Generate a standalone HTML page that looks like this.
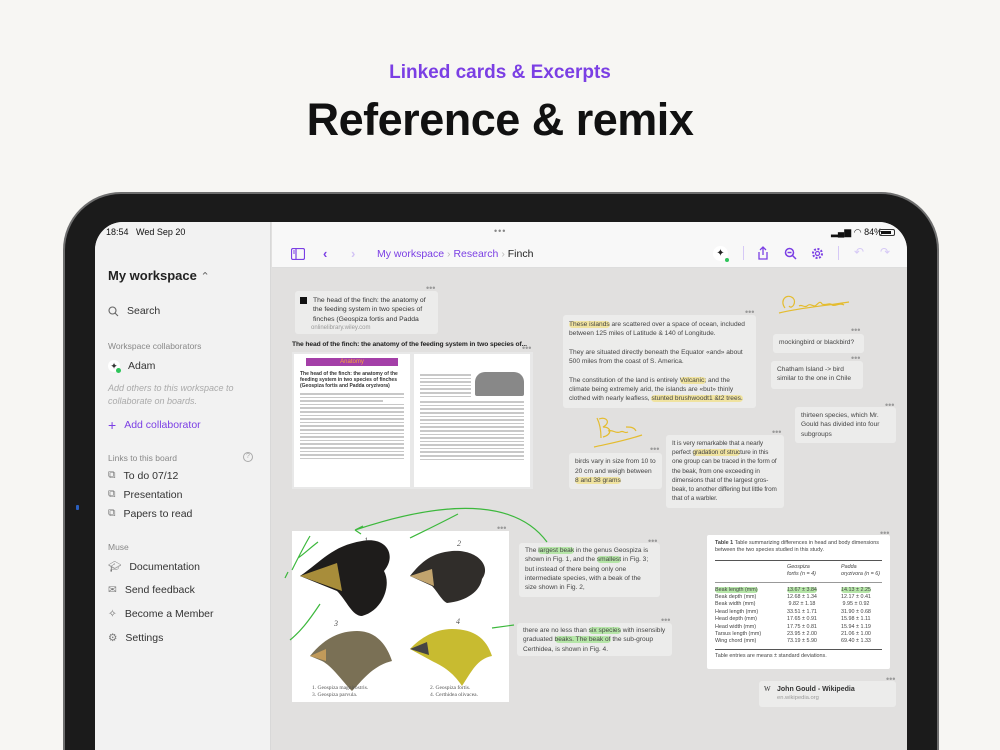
<!DOCTYPE html>
<html><head><meta charset="utf-8">
<style>
*{margin:0;padding:0;box-sizing:border-box}
html,body{width:1000px;height:750px;overflow:hidden}
body{background:#f7f6f3;font-family:"Liberation Sans",sans-serif;position:relative;color:#222}
.a{position:absolute}
.card{position:absolute;background:#ececeb;border-radius:3px;font-size:7.4px;line-height:11.2px;color:#444;padding:6px 7px;overflow:hidden}
.dots{position:absolute;font-size:9px;color:#999;line-height:6px}
.hy{background:#f0e3a0;border-radius:4px}
.hg{background:#b6e6a8;border-radius:4px}
.sbi{position:absolute;left:108px;font-size:10.5px;color:#333;display:flex;align-items:center;gap:8px}
.sec{position:absolute;left:108px;font-size:8.5px;color:#888}
.doc{position:absolute;background:#fff}
.ln{height:1.6px;background:#c8c8c8;margin:2px 0}
</style></head><body>
<div class="a" style="top:62px;width:1000px;text-align:center;color:#7b3fe4;font-size:19px;font-weight:bold">Linked cards &amp; Excerpts</div>
<div class="a" style="top:94px;width:1000px;text-align:center;color:#111;font-size:45px;font-weight:bold;letter-spacing:-0.5px">Reference &amp; remix</div>

<!-- iPad frame -->
<div class="a" style="left:63px;top:192px;width:876px;height:558px;background:#1b1b1b;border-radius:58px 58px 0 0;border:2px solid #6e6e6e;border-bottom:none"></div>
<div class="a" style="left:95px;top:222px;width:812px;height:528px;background:#e1e0df;border-radius:28px 28px 0 0;overflow:hidden">
  <div class="a" style="left:0;top:0;width:176px;height:528px;background:#f2f2f2;border-right:1px solid #d8d8d8"></div>
  <div class="a" style="left:177px;top:0;width:635px;height:46px;background:#f8f8f8;border-bottom:1px solid #ddd"></div>
</div>
<div class="a" style="left:76px;top:505px;width:3px;height:5px;background:#2a5fbf;border-radius:1px"></div>

<!-- status bar -->
<div class="a" style="left:106px;top:227px;font-size:9px;color:#111">18:54&nbsp;&nbsp; Wed Sep 20</div>
<div class="a" style="left:494px;top:226px;font-size:9px;color:#888;letter-spacing:1px">•••</div>
<div class="a" style="left:831px;top:227px;font-size:9px;color:#111">▂▄▆ ◠ 84%</div>
<div class="a" style="left:879px;top:229px;width:16px;height:7px;border:1px solid #333;border-radius:2px;padding:1px"><div style="width:10px;height:3px;background:#111"></div></div>

<!-- sidebar -->
<div class="a" style="left:108px;top:268px;font-size:13px;font-weight:bold;color:#222">My workspace <span style="font-weight:normal;color:#666;font-size:11px">⌃</span></div>
<div class="sbi" style="top:305px"><svg width="11" height="11" viewBox="0 0 11 11"><circle cx="4.5" cy="4.5" r="3.5" fill="none" stroke="#666" stroke-width="1.1"/><path d="M7 7l3 3" stroke="#666" stroke-width="1.1"/></svg>Search</div>
<div class="sec" style="top:341px">Workspace collaborators</div>
<div class="sbi" style="top:360px"><span style="width:12px;height:12px;border-radius:6px;background:#fff;display:inline-block;position:relative;font-size:9px;line-height:12px;text-align:center">✦<span style="position:absolute;right:-1px;bottom:-1px;width:5px;height:5px;border-radius:3px;background:#2ec45a"></span></span>Adam</div>
<div class="a" style="left:108px;top:382px;font-size:9px;line-height:13px;color:#aaa;font-style:italic">Add others to this workspace to<br>collaborate on boards.</div>
<div class="sbi" style="top:417px;color:#7b3fe4"><span style="font-size:14px">+</span> Add collaborator</div>
<div class="sec" style="top:453px">Links to this board</div>
<div class="a" style="left:243px;top:452px;width:10px;height:10px;border:1px solid #aaa;border-radius:5px;font-size:7px;color:#aaa;text-align:center;line-height:8px">?</div>
<div class="sbi" style="top:469px"><span style="color:#777">⧉</span> To do 07/12</div>
<div class="sbi" style="top:488px"><span style="color:#777">⧉</span> Presentation</div>
<div class="sbi" style="top:507px"><span style="color:#777">⧉</span> Papers to read</div>
<div class="sec" style="top:542px">Muse</div>
<div class="sbi" style="top:560px;color:#333"><span style="color:#777">🎓︎</span> Documentation</div>
<div class="sbi" style="top:584px"><span style="color:#777">✉︎</span> Send feedback</div>
<div class="sbi" style="top:608px"><span style="color:#777">✧</span> Become a Member</div>
<div class="sbi" style="top:632px"><span style="color:#777">⚙︎</span> Settings</div>

<!-- toolbar -->
<svg class="a" style="left:291px;top:248px" width="14" height="12"><rect x="0.5" y="0.5" width="13" height="11" rx="1.5" fill="none" stroke="#7b3fe4" stroke-width="1.2"/><path d="M5 1v10" stroke="#7b3fe4" stroke-width="1.2"/><path d="M2 3h2M2 5h2" stroke="#7b3fe4"/></svg>
<div class="a" style="left:323px;top:246px;color:#7b3fe4;font-size:13px;font-weight:bold">‹</div>
<div class="a" style="left:351px;top:246px;color:#d3c4f5;font-size:13px;font-weight:bold">›</div>
<div class="a" style="left:377px;top:248px;font-size:10.5px;color:#7b3fe4">My workspace <span style="color:#bbb">›</span> Research <span style="color:#bbb">›</span> <span style="color:#222">Finch</span></div>
<div class="a" style="left:713px;top:246px;width:15px;height:15px;border-radius:8px;background:#fff;font-size:10px;text-align:center;line-height:15px">✦</div>
<div class="a" style="left:725px;top:258px;width:4px;height:4px;border-radius:2px;background:#2ec45a"></div>
<div class="a" style="left:743px;top:246px;width:1px;height:14px;background:#d6c9f6"></div>
<svg class="a" style="left:757px;top:246px" width="12" height="14"><path d="M6 1v8M3 4l3-3 3 3M2 6v7h8V6" fill="none" stroke="#7b3fe4" stroke-width="1.3"/></svg>
<svg class="a" style="left:784px;top:247px" width="13" height="13"><circle cx="5.5" cy="5.5" r="4" fill="none" stroke="#7b3fe4" stroke-width="1.5"/><path d="M8.5 8.5l3.5 3.5M3.5 5.5h4" stroke="#7b3fe4" stroke-width="1.5"/></svg>
<svg class="a" style="left:811px;top:247px" width="13" height="13"><circle cx="6.5" cy="6.5" r="4.5" fill="none" stroke="#7b3fe4" stroke-width="2" stroke-dasharray="2 1.5"/><circle cx="6.5" cy="6.5" r="2" fill="none" stroke="#7b3fe4" stroke-width="1.2"/></svg>
<div class="a" style="left:838px;top:246px;width:1px;height:14px;background:#d6c9f6"></div>
<div class="a" style="left:854px;top:245px;color:#d6c9f6;font-size:12px">↶</div>
<div class="a" style="left:880px;top:245px;color:#d6c9f6;font-size:12px">↷</div>

<!-- link card -->
<div class="dots" style="left:426px;top:285px">•••</div>
<div class="card" style="left:295px;top:291px;width:143px;height:43px;padding:5px 6px 0 18px;font-size:6.8px;line-height:9.3px;color:#333">
<div class="a" style="left:5px;top:6px;width:7px;height:7px;background:#111"></div>
The head of the finch: the anatomy of the feeding system in two species of finches (Geospiza fortis and Padda
<div style="font-size:6px;color:#999;margin-left:-2px">onlinelibrary.wiley.com</div></div>
<div class="a" style="left:292px;top:341px;font-size:6.7px;font-weight:bold;color:#222;letter-spacing:-0.1px">The head of the finch: the anatomy of the feeding system in two species of...</div>
<div class="dots" style="left:522px;top:345px">•••</div>
<div class="a" style="left:292px;top:352px;width:241px;height:137px;background:#e8e8e8"></div>
<div class="doc" style="left:294px;top:354px;width:116px;height:133px;padding:4px 6px">
<div style="height:8px;background:#a43fa8;margin:0 6px 5px;font-size:6px;color:#f6a63a;text-align:center;line-height:8px">Anatomy</div>
<div style="font-size:5px;font-weight:bold;line-height:6px;color:#333">The head of the finch: the anatomy of the feeding system in two species of finches (Geospiza fortis and Padda oryzivora)</div>
<div class="ln" style="margin-top:4px"></div><div class="ln"></div><div class="ln" style="width:80%"></div><div class="ln"></div><div class="ln"></div><div class="ln"></div><div class="ln"></div><div class="ln"></div><div class="ln"></div><div class="ln"></div><div class="ln"></div><div class="ln"></div><div class="ln"></div><div class="ln"></div><div class="ln"></div><div class="ln"></div><div class="ln"></div><div class="ln"></div><div class="ln"></div>
</div>
<div class="doc" style="left:414px;top:354px;width:116px;height:133px;padding:18px 6px 4px">
<div style="display:flex;gap:4px"><div style="width:52px"><div class="ln"></div><div class="ln"></div><div class="ln"></div><div class="ln"></div><div class="ln"></div><div class="ln"></div><div class="ln"></div></div><div style="width:50px;height:24px;background:#888;border-radius:10px 10px 2px 2px"></div></div>
<div class="ln"></div><div class="ln"></div><div class="ln"></div><div class="ln"></div><div class="ln"></div><div class="ln"></div><div class="ln"></div><div class="ln"></div><div class="ln"></div><div class="ln"></div><div class="ln"></div><div class="ln"></div><div class="ln"></div><div class="ln"></div><div class="ln"></div><div class="ln"></div><div class="ln"></div>
</div>

<!-- text cards -->
<div class="dots" style="left:745px;top:309px">•••</div>
<div class="card" style="left:563px;top:315px;width:193px;height:93px;padding:5px 6px;font-size:6.6px;line-height:9.3px">
<span class="hy">These islands</span> are scattered over a space of ocean, included between 125 miles of Latitude &amp; 140 of Longitude.<br><br>They are situated directly beneath the Equator «and» about 500 miles from the coast of S. America.<br><br>The constitution of the land is entirely <span class="hy">Volcanic;</span> and the climate being extremely arid, the islands are «but» thinly clothed with nearly leafless, <span class="hy">stunted brushwoodt1 &amp;t2 trees.</span></div>

<svg class="a" style="left:775px;top:290px" width="100" height="30"><path d="M10 18c-6-8 2-15 8-10 4 4-1 12-4 8M4 23c20-5 45-7 70-11M24 16c3-2 5 2 8 0 3-3 5 0 8 0 3-2 5-6 7-2 3 2 8-2 10 1 3 2 8-3 12 0" fill="none" stroke="#e4bc2f" stroke-width="1.2"/></svg>
<div class="dots" style="left:851px;top:327px">•••</div>
<div class="card" style="left:773px;top:334px;width:91px;height:19px;padding:4px 6px;font-size:6.6px;line-height:10px">mockingbird or blackbird?</div>
<div class="dots" style="left:851px;top:355px">•••</div>
<div class="card" style="left:771px;top:361px;width:92px;height:28px;padding:4px 6px;font-size:6.6px;line-height:9.3px">Chatham Island -&gt; bird similar to the one in Chile</div>
<div class="dots" style="left:885px;top:402px">•••</div>
<div class="card" style="left:795px;top:407px;width:101px;height:36px;padding:4px 6px;font-size:6.6px;line-height:9.3px">thirteen species, which Mr. Gould has divided into four subgroups</div>

<svg class="a" style="left:592px;top:413px" width="60" height="36"><path d="M5 5c3 6 4 14 4 20M7 6c8-3 12 4 4 8 9 0 9 8 0 10M16 18c5-2 7 3 12 1 4-2 4 2 8 0M34 14c4 0 8 0 10 4M2 34c18-4 30-6 48-12" fill="none" stroke="#e4bc2f" stroke-width="1.2"/></svg>
<div class="dots" style="left:650px;top:446px">•••</div>
<div class="card" style="left:569px;top:453px;width:93px;height:36px;padding:4px 6px;font-size:6.6px;line-height:9.6px">birds vary in size from 10 to 20 cm and weigh between <span class="hy">8 and 38 grams</span></div>
<div class="dots" style="left:772px;top:429px">•••</div>
<div class="card" style="left:666px;top:435px;width:118px;height:73px;padding:4px 6px;font-size:6.4px;line-height:9.2px;letter-spacing:-0.1px">It is very remarkable that a nearly perfect <span class="hy">gradation of struc</span>ture in this one group can be traced in the form of the beak, from one exceeding in dimensions that of the largest gros-beak, to another differing but little from that of a warbler.</div>

<!-- bird image -->
<div class="dots" style="left:497px;top:525px">•••</div>
<div class="a" style="left:292px;top:531px;width:217px;height:171px;background:#fff"></div>
<svg class="a" style="left:292px;top:531px" width="217" height="171">
<text x="72" y="12" font-size="8" fill="#555" font-style="italic" font-family="Liberation Serif">1</text>
<text x="165" y="15" font-size="8" fill="#555" font-style="italic" font-family="Liberation Serif">2</text>
<text x="42" y="95" font-size="8" fill="#555" font-style="italic" font-family="Liberation Serif">3</text>
<text x="164" y="93" font-size="8" fill="#555" font-style="italic" font-family="Liberation Serif">4</text>
<path d="M8 45 C30 30 40 15 70 10 C95 5 105 25 92 40 C100 55 90 80 70 85 C60 85 55 70 45 60 L8 45 Z" fill="#1e1c1b"/>
<path d="M8 45 L45 32 L50 60 Z" fill="#a88d3a"/>
<path d="M118 45 C130 30 140 22 160 20 C185 18 200 35 190 48 C188 60 175 70 155 72 C150 70 145 60 140 55 Z" fill="#302d2a"/>
<path d="M118 45 L140 38 L142 55 Z" fill="#c2a46e"/>
<path d="M18 125 C30 110 45 100 65 100 C85 100 95 115 100 130 C80 135 70 150 60 160 C50 150 40 135 30 130 Z" fill="#7a7055"/>
<path d="M18 125 L34 118 L34 130 Z" fill="#c19a5a"/>
<path d="M118 118 C130 105 145 98 160 98 C185 98 195 110 200 125 C185 128 180 140 170 155 C160 140 150 135 140 130 Z" fill="#c8bb30"/>
<path d="M118 118 L135 111 L137 124 Z" fill="#444"/>
<text x="20" y="158" font-size="5.5" fill="#555" font-family="Liberation Serif">1. Geospiza magnirostris.</text>
<text x="20" y="165" font-size="5.5" fill="#555" font-family="Liberation Serif">3. Geospiza parvula.</text>
<text x="138" y="158" font-size="5.5" fill="#555" font-family="Liberation Serif">2. Geospiza fortis.</text>
<text x="138" y="165" font-size="5.5" fill="#555" font-family="Liberation Serif">4. Certhidea olivacea.</text>
</svg>
<svg class="a" style="left:280px;top:500px" width="280" height="160">
<path d="M267 42 C240 5 180 -5 75 30 M75 30 l8 -4 M75 30 l6 4" fill="none" stroke="#3cb83c" stroke-width="1.2"/>
<path d="M5 78 l3 -6 M12 70 c6 -12 12 -24 18 -34 M18 58 c6 -4 12 -10 20 -16" fill="none" stroke="#3cb83c" stroke-width="1.2"/>
<path d="M130 38 c10 -5 25 -12 48 -24" fill="none" stroke="#3cb83c" stroke-width="1.2"/>
<path d="M10 140 c10 -8 18 -18 30 -36" fill="none" stroke="#3cb83c" stroke-width="1.2"/>
<path d="M212 128 l22 -3" fill="none" stroke="#3cb83c" stroke-width="1.2"/>
</svg>

<div class="dots" style="left:648px;top:538px">•••</div>
<div class="card" style="left:519px;top:543px;width:141px;height:54px;padding:3px 6px;font-size:6.6px;line-height:9.3px">The <span class="hg">largest beak</span> in the genus Geospiza is shown in Fig. 1, and the <span class="hg">smallest</span> in Fig. 3; but instead of there being only one intermediate species, with a beak of the size shown in Fig. 2,</div>
<div class="dots" style="left:661px;top:617px">•••</div>
<div class="card" style="left:517px;top:623px;width:155px;height:33px;padding:3px 6px;font-size:6.6px;line-height:9.3px">there are no less than <span class="hg">six species</span> with insensibly graduated <span class="hg">beaks. The beak of</span> the sub-group Certhidea, is shown in Fig. 4.</div>

<!-- table -->
<div class="dots" style="left:880px;top:530px">•••</div>
<div class="a" style="left:707px;top:535px;width:183px;height:134px;background:#fff;border-radius:2px;padding:5px 8px;font-size:5.4px;line-height:7.4px;color:#444;overflow:hidden">
<b>Table 1</b> Table summarizing differences in head and body dimensions between the two species studied in this study.
<div style="height:1px;background:#555;margin:5px 0 3px"></div>
<div style="display:flex;font-style:italic"><div style="width:72px"></div><div style="width:54px">Geospiza<br>fortis (n = 4)</div><div style="white-space:nowrap">Padda<br>oryzivora (n = 6)</div></div>
<div style="height:1px;background:#999;margin:3px 0 4px"></div>
<div style="display:flex"><div style="width:72px"><span class="hg">Beak length (mm)</span></div><div style="width:54px"><span class="hg">13.67 ± 3.84</span></div><div><span class="hg">14.13 ± 2.25</span></div></div>
<div style="display:flex"><div style="width:72px">Beak depth (mm)<br>Beak width (mm)<br>Head length (mm)<br>Head depth (mm)<br>Head width (mm)<br>Tarsus length (mm)<br>Wing chord (mm)</div><div style="width:54px">12.68 ± 1.34<br>&nbsp;9.82 ± 1.18<br>33.51 ± 1.71<br>17.65 ± 0.91<br>17.75 ± 0.81<br>23.95 ± 2.00<br>73.19 ± 5.90</div><div>12.17 ± 0.41<br>&nbsp;9.95 ± 0.92<br>31.90 ± 0.68<br>15.98 ± 1.11<br>15.94 ± 1.19<br>21.06 ± 1.00<br>69.40 ± 1.33</div></div>
<div style="height:1px;background:#555;margin:3px 0 3px"></div>
Table entries are means ± standard deviations.</div>
<div class="dots" style="left:886px;top:676px">•••</div>
<div class="card" style="left:759px;top:681px;width:137px;height:26px;padding:4px 6px 0 18px;font-size:7px;color:#333;line-height:9px">
<div class="a" style="left:5px;top:4px;font-size:7px;font-family:'Liberation Serif'">W</div><b>John Gould - Wikipedia</b><div style="font-size:5.8px;color:#999">en.wikipedia.org</div></div>
</body></html>
